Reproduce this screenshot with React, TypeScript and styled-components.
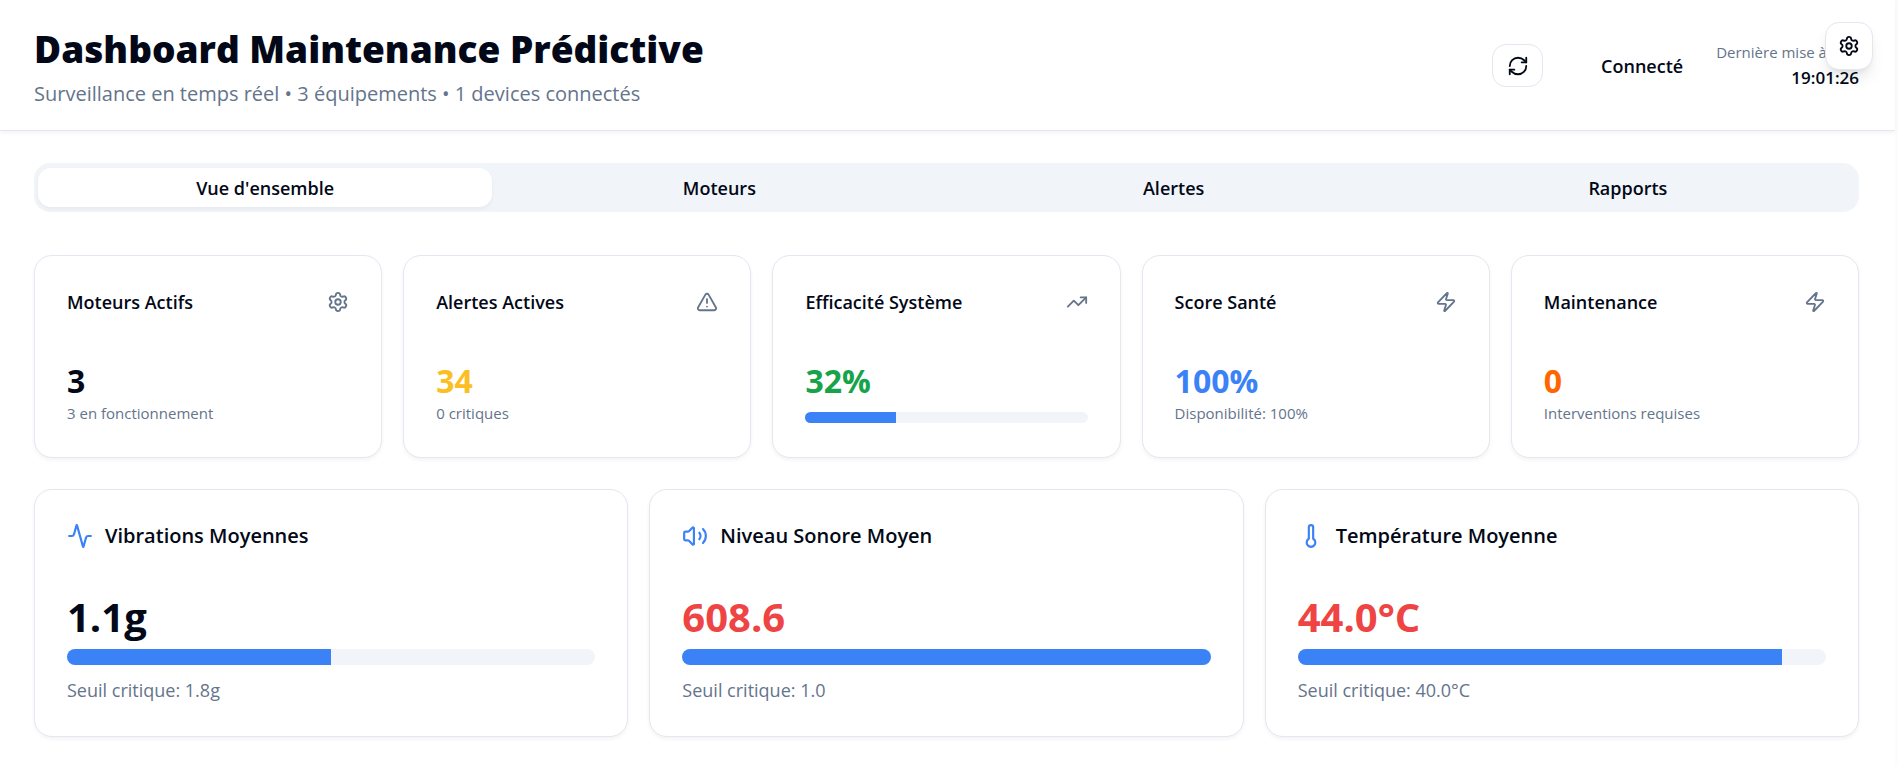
import React from "react";
import styled, { createGlobalStyle } from "styled-components";
import {
  Activity,
  RefreshCw,
  Settings,
  Thermometer,
  TrendingUp,
  TriangleAlert,
  Volume2,
  Zap,
} from "lucide-react";

const color = {
  ink: "#020817",
  muted: "#64748b",
  line: "#e2e8f0",
  track: "#f1f5f9",
  primary: "#3b82f6",
  danger: "#ef4444",
  warning: "#fbbf24",
  success: "#16a34a",
  orange: "#ff6600",
};

const softShadow = "0 2px 4px rgba(0, 0, 0, 0.05)";

const GlobalStyle = createGlobalStyle`
  *, *::before, *::after { box-sizing: border-box; }
  body {
    margin: 0;
    background: #fff;
    color: ${color.ink};
    font-family: "Segoe UI", "Open Sans", "Noto Sans", sans-serif;
  }
  h1, h2, p { margin: 0; }
  button { font: inherit; color: inherit; cursor: pointer; }
`;

const Page = styled.div`
  min-height: 100vh;
  border-right: 3px solid #fcfcfd;
`;

const Header = styled.header`
  display: flex;
  align-items: center;
  justify-content: space-between;
  padding: 22px 36px 21px 34px;
  border-bottom: 1px solid ${color.line};
  box-shadow: ${softShadow};
`;

const Title = styled.h1`
  font-size: 37px;
  font-weight: 800;
  line-height: 54px;
`;

const Subtitle = styled.p`
  margin-top: 3px;
  font-size: 20px;
  line-height: 30px;
  color: ${color.muted};
`;

const HeaderActions = styled.div`
  display: flex;
  align-items: center;
`;

const IconButton = styled.button`
  display: flex;
  align-items: center;
  justify-content: center;
  padding: 0;
  background: #fff;
  border: 1px solid ${color.line};
  border-radius: 14px;
`;

const RefreshButton = styled(IconButton)`
  width: 51px;
  height: 43px;
`;

const SettingsButton = styled(IconButton)`
  position: absolute;
  top: 22px;
  right: 25px;
  width: 48px;
  height: 48px;
  box-shadow: 0 10px 15px -3px rgba(0, 0, 0, 0.1), 0 4px 6px -4px rgba(0, 0, 0, 0.1);
`;

const Status = styled.span`
  margin: 0 33px 0 58px;
  font-size: 18px;
  font-weight: 600;
  line-height: 26px;
`;

const LastUpdate = styled.div`
  text-align: right;
`;

const UpdateLabel = styled.p`
  margin-bottom: 2px;
  font-size: 15px;
  line-height: 22px;
  color: ${color.muted};
`;

const UpdateTime = styled.p`
  font-size: 17px;
  font-weight: 600;
  line-height: 26px;
`;

const Main = styled.main`
  padding: 32px 36px 29px 34px;
`;

const TabList = styled.div`
  display: grid;
  grid-template-columns: repeat(4, 1fr);
  padding: 5px 4px;
  border-radius: 16px;
  background: ${color.track};
`;

const Tab = styled.button<{ $active?: boolean }>`
  padding: 0;
  height: 39px;
  border: 0;
  border-radius: 13px;
  font-size: 18px;
  font-weight: 600;
  line-height: 26px;
  background: ${(p) => (p.$active ? "#fff" : "transparent")};
  box-shadow: ${(p) => (p.$active ? softShadow : "none")};
`;

const StatGrid = styled.section`
  display: grid;
  grid-template-columns: repeat(5, 1fr);
  gap: 21px;
  margin-top: 43px;
`;

const GaugeGrid = styled.section`
  display: grid;
  grid-template-columns: repeat(3, 1fr);
  gap: 21px;
  margin-top: 31px;
`;

const Card = styled.article`
  padding: 33px 32px;
  border: 1px solid ${color.line};
  border-radius: 18px;
  background: #fff;
  box-shadow: ${softShadow};
`;

const StatHead = styled.div`
  display: flex;
  align-items: center;
  justify-content: space-between;
  margin-bottom: 45px;
  color: ${color.muted};
`;

const StatTitle = styled.h2`
  font-size: 18px;
  font-weight: 600;
  line-height: 26px;
  color: ${color.ink};
`;

const StatValue = styled.p<{ $tone: string }>`
  font-size: 32px;
  font-weight: 700;
  line-height: 42px;
  color: ${(p) => p.$tone};
`;

const StatNote = styled.p`
  font-size: 15px;
  line-height: 22px;
  color: ${color.muted};
`;

const GaugeHead = styled.div`
  display: flex;
  align-items: center;
  gap: 12px;
  margin-bottom: 46px;
  color: ${color.primary};
`;

const GaugeTitle = styled.h2`
  font-size: 20px;
  font-weight: 600;
  line-height: 26px;
  color: ${color.ink};
`;

const GaugeValue = styled.p<{ $tone: string }>`
  font-size: 40px;
  font-weight: 700;
  line-height: 44px;
  color: ${(p) => p.$tone};
`;

const GaugeNote = styled.p`
  margin-top: 12px;
  font-size: 18px;
  line-height: 26px;
  color: ${color.muted};
`;

const Track = styled.div<{ $thick?: boolean }>`
  height: ${(p) => (p.$thick ? 16 : 11)}px;
  margin-top: 10px;
  border-radius: 8px;
  overflow: hidden;
  background: ${color.track};
`;

const Fill = styled.div`
  height: 100%;
  background: ${color.primary};
`;

function Progress({ value, label, thick }: { value: number; label: string; thick?: boolean }) {
  return (
    <Track $thick={thick} role="progressbar" aria-label={label} aria-valuenow={value}>
      <Fill style={{ width: `${value}%` }} />
    </Track>
  );
}

const tabs = ["Vue d'ensemble", "Moteurs", "Alertes", "Rapports"];

const stats = [
  { title: "Moteurs Actifs", icon: Settings, value: "3", tone: color.ink, note: "3 en fonctionnement" },
  { title: "Alertes Actives", icon: TriangleAlert, value: "34", tone: color.warning, note: "0 critiques" },
  { title: "Efficacité Système", icon: TrendingUp, value: "32%", tone: color.success, progress: 32 },
  { title: "Score Santé", icon: Zap, value: "100%", tone: color.primary, note: "Disponibilité: 100%" },
  { title: "Maintenance", icon: Zap, value: "0", tone: color.orange, note: "Interventions requises" },
];

const gauges = [
  { title: "Vibrations Moyennes", icon: Activity, value: "1.1g", tone: color.ink, progress: 50, note: "Seuil critique: 1.8g" },
  { title: "Niveau Sonore Moyen", icon: Volume2, value: "608.6", tone: color.danger, progress: 100, note: "Seuil critique: 1.0" },
  { title: "Température Moyenne", icon: Thermometer, value: "44.0°C", tone: color.danger, progress: 91.7, note: "Seuil critique: 40.0°C" },
];

export default function App() {
  return (
    <Page>
      <GlobalStyle />
      <Header>
        <div>
          <Title>Dashboard Maintenance Prédictive</Title>
          <Subtitle>Surveillance en temps réel • 3 équipements • 1 devices connectés</Subtitle>
        </div>
        <HeaderActions>
          <RefreshButton aria-label="Actualiser">
            <RefreshCw size={22} />
          </RefreshButton>
          <Status>Connecté</Status>
          <LastUpdate>
            <UpdateLabel>Dernière mise à jour</UpdateLabel>
            <UpdateTime>19:01:26</UpdateTime>
          </LastUpdate>
        </HeaderActions>
      </Header>
      <SettingsButton aria-label="Paramètres">
        <Settings size={22} />
      </SettingsButton>
      <Main>
        <TabList role="tablist">
          {tabs.map((tab, i) => (
            <Tab key={tab} role="tab" aria-selected={i === 0} $active={i === 0}>
              {tab}
            </Tab>
          ))}
        </TabList>
        <StatGrid>
          {stats.map(({ title, icon: Icon, value, tone, note, progress }) => (
            <Card key={title}>
              <StatHead>
                <StatTitle>{title}</StatTitle>
                <Icon size={22} />
              </StatHead>
              <StatValue $tone={tone}>{value}</StatValue>
              {note && <StatNote>{note}</StatNote>}
              {progress !== undefined && <Progress value={progress} label={title} />}
            </Card>
          ))}
        </StatGrid>
        <GaugeGrid>
          {gauges.map(({ title, icon: Icon, value, tone, note, progress }) => (
            <Card key={title}>
              <GaugeHead>
                <Icon size={26} />
                <GaugeTitle>{title}</GaugeTitle>
              </GaugeHead>
              <GaugeValue $tone={tone}>{value}</GaugeValue>
              <Progress value={progress} label={title} thick />
              <GaugeNote>{note}</GaugeNote>
            </Card>
          ))}
        </GaugeGrid>
      </Main>
    </Page>
  );
}
